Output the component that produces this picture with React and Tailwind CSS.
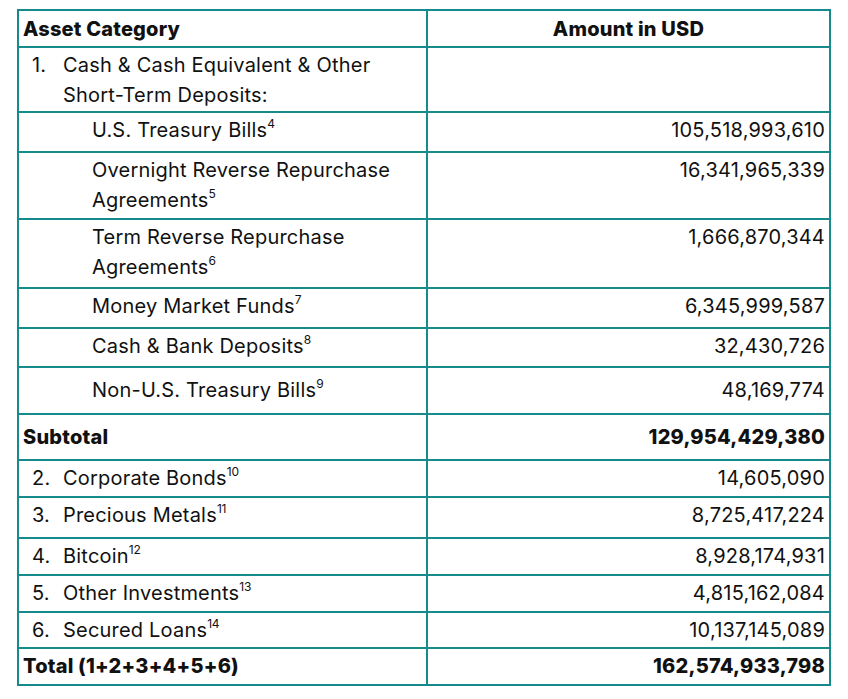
import React from 'react';

// ── Reserve breakdown rows ────────────────────────────────────────────────────
// kind: 'num' = numbered category, 'sub' = indented sub item, 'bold' = total line
const ROWS = [
  { kind: 'num', n: '1.', lines: ['Cash & Cash Equivalent & Other', 'Short-Term Deposits:'], amount: '', h: 'h-[65px]' },
  { kind: 'sub', lines: ['U.S. Treasury Bills'], sup: '4', amount: '105,518,993,610', h: 'h-[40px]' },
  { kind: 'sub', lines: ['Overnight Reverse Repurchase', 'Agreements'], sup: '5', amount: '16,341,965,339', h: 'h-[67px]' },
  { kind: 'sub', lines: ['Term Reverse Repurchase', 'Agreements'], sup: '6', amount: '1,666,870,344', h: 'h-[69px]' },
  { kind: 'sub', lines: ['Money Market Funds'], sup: '7', amount: '6,345,999,587', h: 'h-[40px]' },
  { kind: 'sub', lines: ['Cash & Bank Deposits'], sup: '8', amount: '32,430,726', h: 'h-[39px]' },
  { kind: 'sub', lines: ['Non-U.S. Treasury Bills'], sup: '9', amount: '48,169,774', h: 'h-[47px]', pt: 'pt-[7px]' },
  { kind: 'bold', lines: ['Subtotal'], amount: '129,954,429,380', h: 'h-[46px]', pt: 'pt-[7px]' },
  { kind: 'num', n: '2.', lines: ['Corporate Bonds'], sup: '10', amount: '14,605,090', h: 'h-[37px]' },
  { kind: 'num', n: '3.', lines: ['Precious Metals'], sup: '11', amount: '8,725,417,224', h: 'h-[41px]' },
  { kind: 'num', n: '4.', lines: ['Bitcoin'], sup: '12', amount: '8,928,174,931', h: 'h-[37px]' },
  { kind: 'num', n: '5.', lines: ['Other Investments'], sup: '13', amount: '4,815,162,084', h: 'h-[37px]' },
  { kind: 'num', n: '6.', lines: ['Secured Loans'], sup: '14', amount: '10,137,145,089', h: 'h-[36px]' },
  { kind: 'bold', lines: ['Total (1+2+3+4+5+6)'], amount: '162,574,933,798', h: 'h-[37px]' },
];

function Label({ lines, sup }) {
  return lines.map((line, i) => (
    <div key={i}>
      {line}
      {i === lines.length - 1 && sup && (
        <sup className="text-[12px] -top-[9px] tracking-[-0.02em]">{sup}</sup>
      )}
    </div>
  ));
}

export default function App() {
  return (
    <div className="w-[848px] h-[699px] bg-white text-[#111] font-['Inter',sans-serif] text-[20px] leading-[30px] tracking-[0.01em]">
      <table className="ml-[17px] mt-[9px] w-[812px] table-fixed border-collapse">
        <colgroup>
          <col className="w-[409px]" />
          <col className="w-[403px]" />
        </colgroup>
        <thead>
          <tr className="h-[37px]">
            <th className="border-2 border-[#178b8b] pl-[4px] text-left align-middle font-extrabold">Asset Category</th>
            <th className="border-2 border-[#178b8b] text-center align-middle font-extrabold">Amount in USD</th>
          </tr>
        </thead>
        <tbody>
          {ROWS.map((r, i) => (
            <tr key={i} className={r.h}>
              <td className={`border-2 border-[#178b8b] align-top ${r.pt || 'pt-[2px]'}`}>
                {r.kind === 'num' && (
                  <div className="flex pl-[13px]">
                    <span className="w-[31px] shrink-0">{r.n}</span>
                    <div><Label lines={r.lines} sup={r.sup} /></div>
                  </div>
                )}
                {r.kind === 'sub' && (
                  <div className="pl-[73px]"><Label lines={r.lines} sup={r.sup} /></div>
                )}
                {r.kind === 'bold' && (
                  <div className="pl-[4px] font-extrabold">{r.lines[0]}</div>
                )}
              </td>
              <td className={`border-2 border-[#178b8b] align-top text-right pr-[4px] ${r.pt || 'pt-[2px]'} ${r.kind === 'bold' ? 'font-extrabold' : ''}`}>
                {r.amount}
              </td>
            </tr>
          ))}
        </tbody>
      </table>
    </div>
  );
}
